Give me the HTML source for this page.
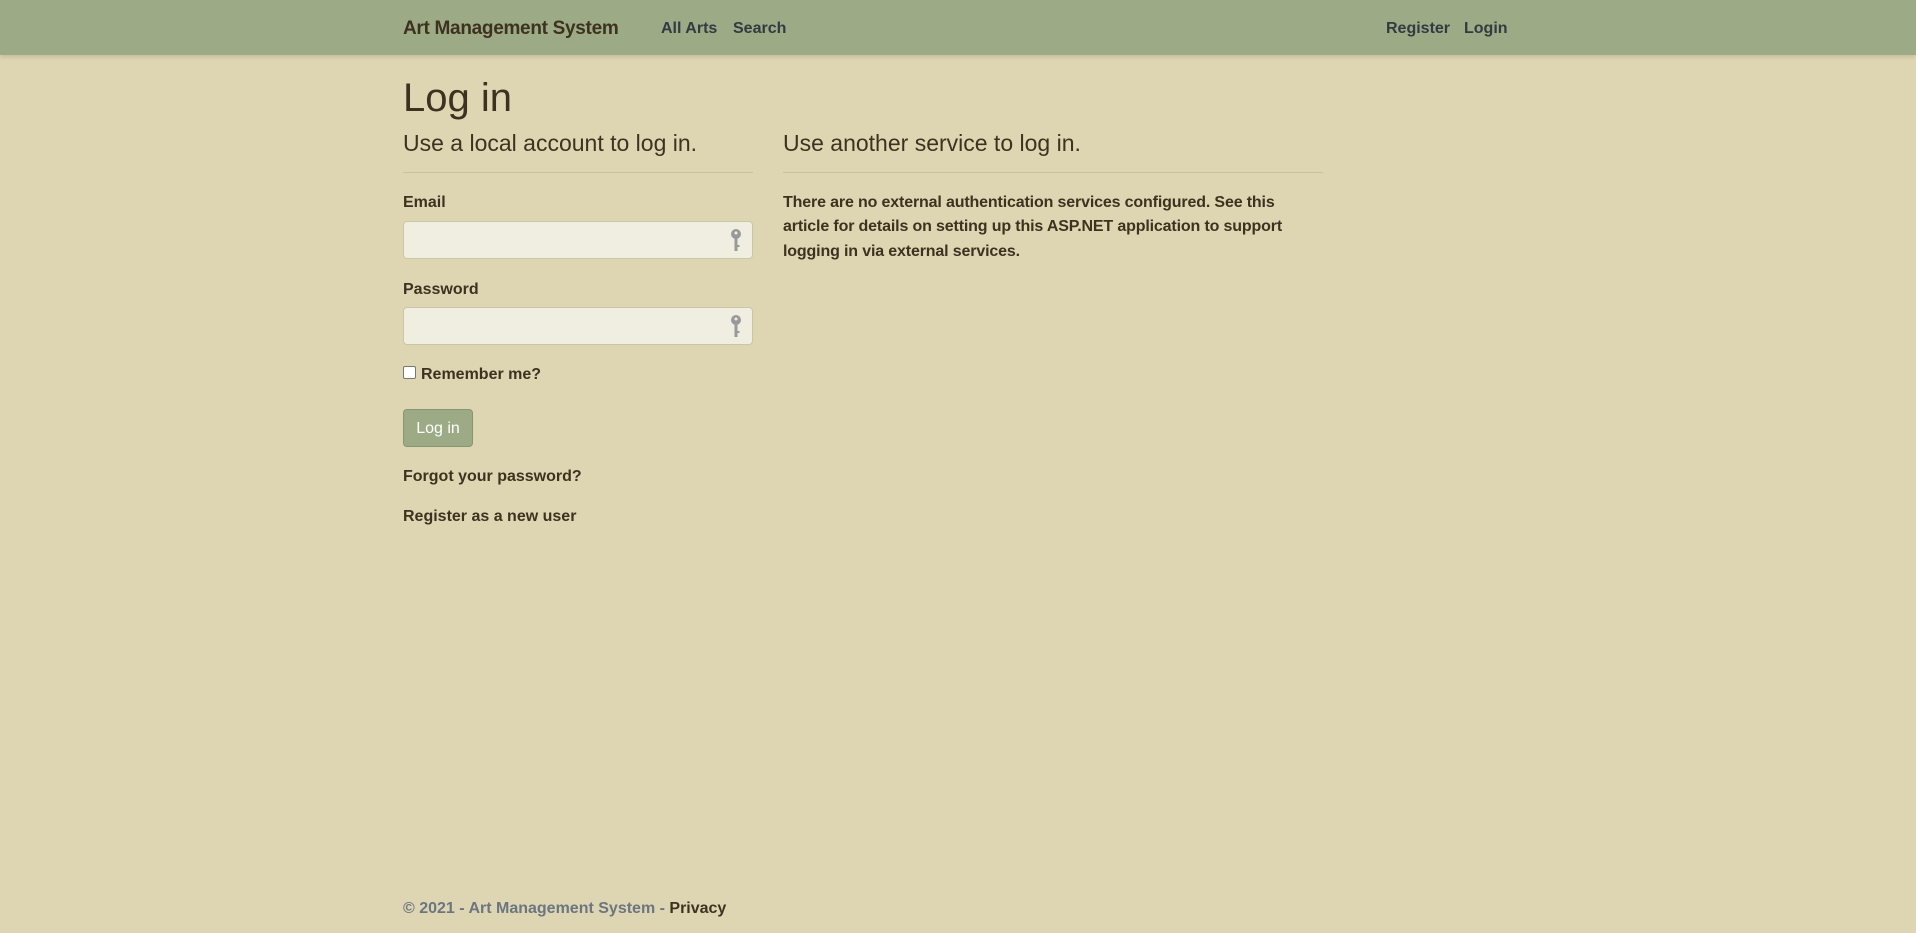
<!DOCTYPE html>
<html><head><meta charset="utf-8">
<style>
*{box-sizing:border-box;margin:0;padding:0}
body{width:1916px;height:933px;background:#ded6b2;font-family:"Liberation Sans",sans-serif;color:#3d3220;position:relative;overflow:hidden}
.nav{position:absolute;left:0;top:0;width:1916px;height:55px;background:#9caa86;box-shadow:0 2px 4px rgba(0,0,0,.12)}
.a{position:absolute;white-space:nowrap}
.brand{left:403px;top:18px;font-size:19px;font-weight:bold;color:#3d3220;letter-spacing:-0.3px}
.nl{top:20px;font-size:16px;font-weight:bold;color:#343a40}
h1{position:absolute;left:403px;top:76px;font-size:40px;font-weight:normal;color:#3d3220}
.h4{top:130px;font-size:23px;color:#3d3220}
.hr{position:absolute;height:1px;background:#c9c0a0;top:172px}
.lbl{font-size:16px;font-weight:bold}
.inp{position:absolute;left:403px;width:350px;height:38px;background:#f0eee0;border:1px solid #ccc6a8;border-radius:4px}
.key{position:absolute;right:10px;top:6px}
.p{left:783px;top:191px;font-size:16px;font-weight:bold;line-height:24.4px;width:540px;white-space:normal;letter-spacing:-0.15px}
.btn{position:absolute;left:403px;top:409px;width:70px;height:38px;background:#9caa86;border:1px solid #86966e;border-radius:4px;color:#fff;font-size:16px;text-align:center;line-height:38px}
</style></head><body>
<div class="nav"></div>
<div class="a brand">Art Management System</div>
<div class="a nl" style="left:661px">All Arts</div>
<div class="a nl" style="left:733px">Search</div>
<div class="a nl" style="left:1386px">Register</div>
<div class="a nl" style="left:1464px">Login</div>
<h1>Log in</h1>
<div class="a h4" style="left:403px">Use a local account to log in.</div>
<div class="a h4" style="left:783px">Use another service to log in.</div>
<div class="hr" style="left:403px;width:350px"></div>
<div class="hr" style="left:783px;width:540px"></div>
<div class="a lbl" style="left:403px;top:194px">Email</div>
<div class="inp" style="top:221px"><svg class="key" width="12" height="24" viewBox="0 0 12 24"><circle cx="6" cy="6" r="5" fill="#999"/><circle cx="6" cy="5" r="1.5" fill="#f0eee0"/><rect x="4.5" y="10" width="3" height="13" fill="#999"/><rect x="7" y="17" width="2.5" height="2" fill="#999"/></svg></div>
<div class="a lbl" style="left:403px;top:281px">Password</div>
<div class="inp" style="top:307px"><svg class="key" width="12" height="24" viewBox="0 0 12 24"><circle cx="6" cy="6" r="5" fill="#999"/><circle cx="6" cy="5" r="1.5" fill="#f0eee0"/><rect x="4.5" y="10" width="3" height="13" fill="#999"/><rect x="7" y="17" width="2.5" height="2" fill="#999"/></svg></div>
<div class="a" style="left:403px;top:366px;width:13px;height:13px;border:1px solid #767676;border-radius:2px;background:#fff"></div>
<div class="a lbl" style="left:421px;top:366px">Remember me?</div>
<div class="btn">Log in</div>
<div class="a lbl" style="left:403px;top:468px">Forgot your password?</div>
<div class="a lbl" style="left:403px;top:508px">Register as a new user</div>
<div class="a p">There are no external authentication services configured. See this article for details on setting up this ASP.NET application to support logging in via external services.</div>
<div class="a lbl" style="left:403px;top:900px;color:#6c7580">© 2021 - Art Management System - <span style="color:#3d3220">Privacy</span></div>
</body></html>
